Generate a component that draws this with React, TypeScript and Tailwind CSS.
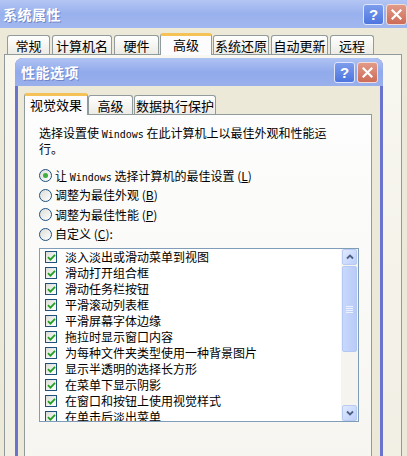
import React from "react"

const outerTabs = [
  { label: "常规", w: "w-[43px]" },
  { label: "计算机名", w: "w-[60px]" },
  { label: "硬件", w: "w-[45px]" },
  { label: "高级", w: "w-[52px]", active: true },
  { label: "系统还原", w: "w-[56px]" },
  { label: "自动更新", w: "w-[57px]" },
  { label: "远程", w: "w-[44px]" },
]

const innerTabs = [
  { label: "视觉效果", w: "w-[64px]", active: true },
  { label: "高级", w: "w-[45px]" },
  { label: "数据执行保护", w: "w-[82px]" },
]

const effects = [
  "淡入淡出或滑动菜单到视图",
  "滑动打开组合框",
  "滑动任务栏按钮",
  "平滑滚动列表框",
  "平滑屏幕字体边缘",
  "拖拉时显示窗口内容",
  "为每种文件夹类型使用一种背景图片",
  "显示半透明的选择长方形",
  "在菜单下显示阴影",
  "在窗口和按钮上使用视觉样式",
  "在单击后淡出菜单",
]

function TitleButtons() {
  return (
    <div className="flex gap-[2px]">
      <div className="w-[21px] h-[21px] rounded-[3px] border border-[#dfe6fb] bg-gradient-to-b from-[#7d9cec] to-[#4d75df] flex items-center justify-center text-white font-bold text-[15px] leading-none font-['Liberation_Sans',sans-serif]">
        ?
      </div>
      <div className="w-[21px] h-[21px] rounded-[3px] border border-[#f3dcd6] bg-gradient-to-b from-[#e29a88] to-[#cc6c58] flex items-center justify-center">
        <svg width="11" height="11" viewBox="0 0 11 11">
          <path d="M1.5 1.5 L9.5 9.5 M9.5 1.5 L1.5 9.5" stroke="white" strokeWidth="2.2" strokeLinecap="square" />
        </svg>
      </div>
    </div>
  )
}

function Tab({ label, w, active }: { label: string; w: string; active?: boolean }) {
  if (active) {
    return (
      <div
        className={`${w} h-[22px] -mx-[1px] -mb-[1px] relative z-10 rounded-t-[3px] border border-b-0 border-[#919b9c] border-t-[3px] border-t-[#f5c258] bg-[#fcfcfe] flex items-start justify-center pt-[1px] text-[13px] leading-[15px]`}
      >
        {label}
      </div>
    )
  }
  return (
    <div
      className={`${w} h-[19px] rounded-t-[3px] border border-b-0 border-[#919b9c] bg-gradient-to-b from-white to-[#ecebe5] flex items-center justify-center text-[13px] leading-[15px]`}
    >
      {label}
    </div>
  )
}

function Radio({ checked, children }: { checked?: boolean; children: React.ReactNode }) {
  return (
    <div className="h-[19.5px] flex items-center">
      <div className="w-[13px] h-[13px] rounded-full border border-[#1c5180] bg-gradient-to-br from-[#dcdcd7] to-white flex items-center justify-center">
        {checked && <div className="w-[5px] h-[5px] rounded-full bg-[#3fae3f]" />}
      </div>
      <span className="ml-[3px]">{children}</span>
    </div>
  )
}

function Check() {
  return (
    <div className="w-[12px] h-[12px] border border-[#1c5180] bg-gradient-to-br from-[#dcdcd7] to-white flex items-center justify-center shrink-0">
      <svg width="9" height="9" viewBox="0 0 9 9">
        <path d="M1 4.2 L3.4 6.6 L8 1.8" stroke="#21a121" strokeWidth="1.8" fill="none" />
      </svg>
    </div>
  )
}

function Scrollbar() {
  return (
    <div className="w-[17px] h-full flex flex-col bg-[#f5f4ef] px-[1px]">
      <div className="h-[16px] rounded-[2px] border border-[#b9cbf3] bg-gradient-to-br from-[#e1eafe] to-[#bccefa] flex items-center justify-center">
        <svg width="8" height="6" viewBox="0 0 8 6">
          <path d="M1 4.5 L4 1.5 L7 4.5" stroke="#4d6185" strokeWidth="1.8" fill="none" />
        </svg>
      </div>
      <div className="h-[86px] mt-[1px] rounded-[2px] border border-[#b4c8f6] bg-gradient-to-r from-[#c9d8fc] to-[#b8cbf8] flex items-center justify-center">
        <div className="flex flex-col gap-[1px]">
          <div className="w-[7px] h-[1px] bg-[#eef3fe]" />
          <div className="w-[7px] h-[1px] bg-[#eef3fe]" />
          <div className="w-[7px] h-[1px] bg-[#eef3fe]" />
          <div className="w-[7px] h-[1px] bg-[#eef3fe]" />
        </div>
      </div>
      <div className="flex-1" />
      <div className="h-[16px] rounded-[2px] border border-[#b9cbf3] bg-gradient-to-br from-[#e1eafe] to-[#bccefa] flex items-center justify-center">
        <svg width="8" height="6" viewBox="0 0 8 6">
          <path d="M1 1.5 L4 4.5 L7 1.5" stroke="#4d6185" strokeWidth="1.8" fill="none" />
        </svg>
      </div>
    </div>
  )
}

export default function App() {
  return (
    <div className="w-[407px] h-[456px] overflow-hidden bg-[#ece9d8] text-black text-[12px] font-['Noto_Sans_CJK_SC',sans-serif] flex flex-col">
      {/* outer title bar */}
      <div className="h-[28px] shrink-0 bg-gradient-to-b from-[#b3c5f3] via-[#98b0ed] to-[#a2b7ef] flex items-center justify-between pl-[3px] pr-[0px]">
        <span className="text-white font-bold text-[14px] tracking-[0.5px] [text-shadow:1px_1px_0_#6f86c8]">系统属性</span>
        <TitleButtons />
      </div>

      <div className="flex-1 flex flex-col pl-[4px] pr-[5px] pt-[5px]">
        {/* outer tabs */}
        <div className="flex items-end gap-[2px] pl-[3px] h-[21px]">
          {outerTabs.map((t) => (
            <Tab key={t.label} {...t} />
          ))}
        </div>

        {/* outer panel */}
        <div className="flex-1 border border-[#919b9c] bg-gradient-to-b from-[#f8f7f0] to-[#f1efe4] pl-[10px] pt-[3px]">
          {/* performance options dialog */}
          <div className="w-[368px] h-[420px] rounded-t-[8px] bg-[#6a74cc] flex flex-col overflow-hidden">
            <div className="h-[28px] shrink-0 bg-gradient-to-b from-[#b0c3f3] via-[#91aaeb] to-[#9ab0ec] flex items-center justify-between pl-[6px] pr-[5px]">
              <span className="text-white font-bold text-[14px] tracking-[0.5px] [text-shadow:1px_1px_0_#6f86c8]">性能选项</span>
              <TitleButtons />
            </div>
            <div className="flex-1 mx-[3px] bg-[#ece9d8] pl-[6px] pr-[8px] pt-[8px] flex flex-col">
              {/* inner tabs */}
              <div className="flex items-end gap-[1px] pl-[1px] h-[20px]">
                {innerTabs.map((t) => (
                  <Tab key={t.label} {...t} />
                ))}
              </div>
              <div className="flex-1 border border-[#919b9c] bg-gradient-to-b from-[#fdfdfd] to-[#f6f5f0] pl-[14px] pr-[12px] pt-[11px]">
                <p className="leading-[14px]">
                  选择设置使 <span className="font-['DejaVu_Sans_Mono',monospace] text-[10px]">Windows</span> 在此计算机上以最佳外观和性能运
                  <br />
                  行。
                </p>
                <div className="mt-[10px] flex flex-col">
                  <Radio checked>
                    让 <span className="font-['DejaVu_Sans_Mono',monospace] text-[10px]">Windows</span> 选择计算机的最佳设置 (<u>L</u>)
                  </Radio>
                  <Radio>调整为最佳外观 (<u>B</u>)</Radio>
                  <Radio>调整为最佳性能 (<u>P</u>)</Radio>
                  <Radio>自定义 (<u>C</u>):</Radio>
                </div>
                {/* effects list */}
                <div className="mt-[4px] w-[320px] h-[174px] border border-[#7f9db9] bg-white flex">
                  <div className="flex-1 overflow-hidden">
                    {effects.map((e) => (
                      <div key={e} className="h-[16px] flex items-center pl-[5px] gap-[8px] leading-[14px] text-[12px]">
                        <Check />
                        <span className="whitespace-nowrap">{e}</span>
                      </div>
                    ))}
                  </div>
                  <Scrollbar />
                </div>
              </div>
            </div>
          </div>
        </div>
      </div>
    </div>
  )
}
